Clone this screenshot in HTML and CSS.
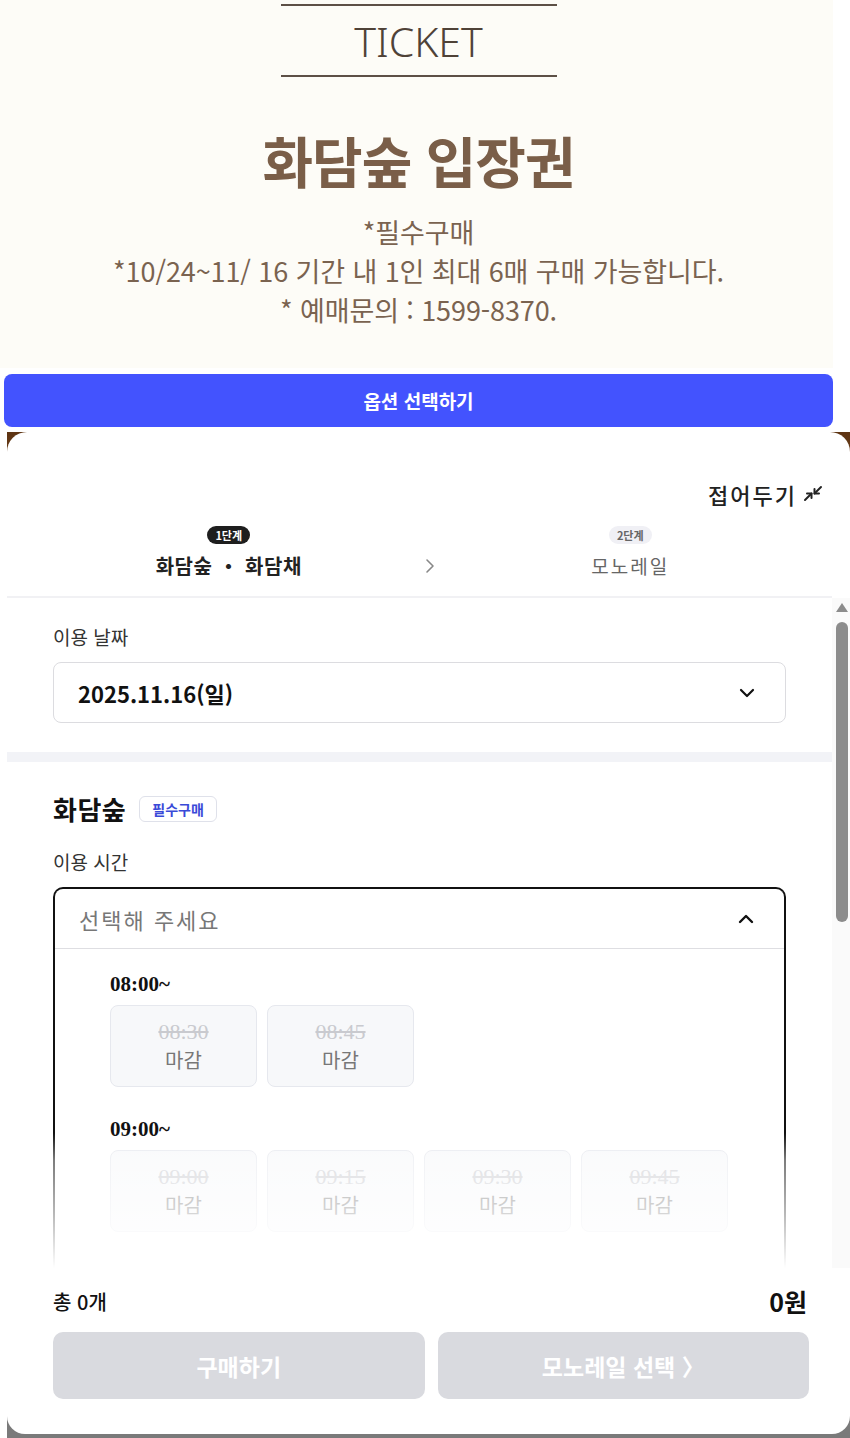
FILE: index.html
```html
<!DOCTYPE html>
<html lang="ko">
<head>
<meta charset="utf-8">
<title>화담숲 입장권</title>
<link rel="stylesheet" href="styles.css">
</head>
<body>
<section class="hero">
  <div class="ticket">TICKET</div>
  <h1 class="hero-title">화담숲 입장권</h1>
  <div class="hero-desc">
    <p class="desc-line">*필수구매</p>
    <p class="desc-line">*10/24~11/ 16 기간 내 1인 최대 6매 구매 가능합니다.</p>
    <p class="desc-line">* 예매문의 : 1599-8370.</p>
  </div>
</section>
<button class="cta">옵션 선택하기</button>

<div class="sheet-wrap">
  <div class="sheet">
    <div class="collapse">
      <span>접어두기</span>
      <svg class="collapse-icon" width="22" height="18" viewBox="0 0 22 18" fill="none" stroke="#222" stroke-width="2" stroke-linecap="round" stroke-linejoin="round">
        <path d="M3 16 L9.5 9.5"/><path d="M5 9.5 H9.5 V14"/>
        <path d="M19 3 L12.5 9.5"/><path d="M12.5 5 V9.5 H17"/>
      </svg>
    </div>

    <div class="steps">
      <div class="step">
        <span class="step-badge active">1단계</span>
        <span class="step-label active">화담숲 ・ 화담채</span>
      </div>
      <div class="step-arrow">
        <svg width="10" height="16" viewBox="0 0 10 16" fill="none" stroke="#888" stroke-width="1.6" stroke-linecap="round" stroke-linejoin="round"><path d="M2 2 L8 8 L2 14"/></svg>
      </div>
      <div class="step">
        <span class="step-badge">2단계</span>
        <span class="step-label">모노레일</span>
      </div>
    </div>

    <div class="scroll">
      <div class="scroll-content">
        <div class="section">
          <div class="field-label">이용 날짜</div>
          <div class="select">
            <span class="select-value">2025.11.16(일)</span>
            <svg width="16" height="10" viewBox="0 0 16 10" fill="none" stroke="#111" stroke-width="2.2" stroke-linecap="round" stroke-linejoin="round"><path d="M2 2 L8 8 L14 2"/></svg>
          </div>
        </div>
        <div class="band"></div>
        <div class="section section-2">
          <div class="title-row">
            <h2 class="prod-title">화담숲</h2>
            <span class="req-badge">필수구매</span>
          </div>
          <div class="field-label gap">이용 시간</div>
          <div class="time-select">
            <div class="time-head">
              <span class="placeholder">선택해 주세요</span>
              <svg width="16" height="10" viewBox="0 0 16 10" fill="none" stroke="#111" stroke-width="2.4" stroke-linecap="round" stroke-linejoin="round"><path d="M2 8 L8 2 L14 8"/></svg>
            </div>
            <div class="time-list">
              <div class="group-label">08:00~</div>
              <div class="slots">
                <div class="slot"><span class="slot-time">08:30</span><span class="slot-status">마감</span></div>
                <div class="slot"><span class="slot-time">08:45</span><span class="slot-status">마감</span></div>
              </div>
              <div class="group-label g2">09:00~</div>
              <div class="slots">
                <div class="slot"><span class="slot-time">09:00</span><span class="slot-status">마감</span></div>
                <div class="slot"><span class="slot-time">09:15</span><span class="slot-status">마감</span></div>
                <div class="slot"><span class="slot-time">09:30</span><span class="slot-status">마감</span></div>
                <div class="slot"><span class="slot-time">09:45</span><span class="slot-status">마감</span></div>
              </div>
            </div>
          </div>
        </div>
        <div class="fade"></div>
      </div>
      <div class="scrollbar">
        <div class="sb-arrow"></div>
        <div class="sb-thumb"></div>
      </div>
    </div>

    <div class="footer">
      <div class="total-row">
        <span class="total-count">총 0개</span>
        <span class="total-price">0원</span>
      </div>
      <div class="actions">
        <button class="btn">구매하기</button>
        <button class="btn">모노레일 선택 〉</button>
      </div>
    </div>
  </div>
</div>
</body>
</html>
```
FILE: styles.css
```css
* { box-sizing: border-box; margin: 0; padding: 0; }
body {
  margin: 0;
  width: 850px;
  height: 1438px;
  overflow: hidden;
  background: #fff;
  font-family: "Noto Sans CJK KR", "Noto Sans", sans-serif;
  color: #222;
}
button { font-family: inherit; border: none; cursor: pointer; }

.hero {
  width: 833px;
  height: 368px;
  background: #fdfcf7;
  padding: 4px 0 0 4px;
  text-align: center;
}
.ticket {
  width: 276px;
  height: 73px;
  margin: 0 auto;
  border-top: 2px solid #5d5046;
  border-bottom: 2px solid #5d5046;
  display: flex;
  align-items: center;
  justify-content: center;
  font-family: "Noto Sans", sans-serif;
  font-weight: 300;
  font-size: 41px;
  color: #4f4237;
}
.hero-title {
  margin-top: 51px;
  font-size: 55px;
  line-height: 62px;
  font-weight: 700;
  letter-spacing: -1px;
  color: #7a5e48;
}
.hero-desc {
  margin-top: 22px;
  color: #7a6350;
}
.desc-line {
  font-size: 27px;
  line-height: 39px;
  letter-spacing: -0.1px;
}
.cta {
  display: flex;
  align-items: center;
  justify-content: center;
  margin: 6px 0 0 4px;
  width: 829px;
  height: 53px;
  background: #4353fe;
  border-radius: 8px;
  color: #fff;
  font-size: 19px;
  font-weight: 700;
}

.sheet-wrap {
  margin: 5px 0 0 7px;
  width: 843px;
  padding-bottom: 4px;
  background: linear-gradient(to bottom, #5e3412 0, #6a3f1c 30px, transparent 30px, transparent calc(100% - 30px), #7a7a7a calc(100% - 30px));
}
.sheet {
  background: #fff;
  border-radius: 20px 20px 18px 18px;
  padding-bottom: 35px;
}

.collapse {
  padding: 48px 26px 0 0;
  display: flex;
  justify-content: flex-end;
  align-items: center;
  gap: 5px;
  font-size: 22px;
  line-height: 28px;
  font-weight: 500;
  letter-spacing: 2px;
  color: #222;
}
.collapse-icon { margin-top: -2px; }

.steps {
  margin: 18px 18px 0 0;
  padding: 0 11px 18px 31px;
  display: grid;
  grid-template-columns: 1fr 20px 1fr;
  border-bottom: 2px solid #f1f1f4;
}
.step { display: flex; flex-direction: column; align-items: center; }
.step-badge {
  height: 18px;
  line-height: 18px;
  padding: 0 8px;
  border-radius: 9px;
  font-size: 11px;
  font-weight: 700;
  background: #f0f0f5;
  color: #666;
}
.step-badge.active { background: #1e1e1e; color: #fff; }
.step-label {
  margin-top: 10px;
  font-size: 19px;
  line-height: 24px;
  color: #666;
  letter-spacing: 2px;
}
.step-label.active { color: #222; font-weight: 600; letter-spacing: 0.5px; font-size: 20px; }
.step-arrow {
  display: flex;
  align-items: flex-end;
  justify-content: center;
  padding-bottom: 4px;
}

.scroll { display: flex; height: 670px; }
.scroll-content {
  flex: 1;
  position: relative;
  overflow: hidden;
}
.scrollbar {
  width: 18px;
  background: #fafafa;
  padding: 5px 2px 0 4px;
}
.sb-arrow {
  width: 0;
  height: 0;
  margin: 0 auto;
  border-left: 6px solid transparent;
  border-right: 6px solid transparent;
  border-bottom: 9px solid #8c8c8c;
}
.sb-thumb {
  margin-top: 10px;
  height: 300px;
  background: #8c8c8c;
  border-radius: 6px;
}

.section { padding: 27px 46px 29px; }
.section-2 { padding: 32px 46px 0; }
.field-label { font-size: 19px; line-height: 24px; color: #333; }
.field-label.gap { margin-top: 26px; }
.select {
  margin-top: 13px;
  height: 61px;
  border: 1px solid #dcdce0;
  border-radius: 8px;
  padding: 0 30px 0 24px;
  display: flex;
  align-items: center;
  justify-content: space-between;
}
.select-value { font-size: 22px; font-weight: 600; color: #111; }
.band { height: 10px; background: #f2f3f7; }

.title-row { display: flex; align-items: center; gap: 13px; }
.prod-title { font-size: 26px; line-height: 30px; font-weight: 700; color: #111; letter-spacing: 0.5px; }
.req-badge {
  height: 26px;
  line-height: 24px;
  padding: 0 12px;
  border: 1px solid #dfe1ea;
  border-radius: 6px;
  color: #3a4ad8;
  font-size: 14px;
  font-weight: 600;
}

.time-select {
  margin-top: 13px;
  border: 2px solid #111;
  border-bottom: none;
  border-radius: 10px 10px 0 0;
  height: 420px;
}
.time-head {
  height: 60px;
  border-bottom: 1px solid #dedee2;
  padding: 0 30px 0 24px;
  display: flex;
  align-items: center;
  justify-content: space-between;
}
.placeholder { font-size: 22px; color: #777; letter-spacing: 2px; }
.time-list { padding: 22px 0 0 55px; }
.group-label {
  font-family: "Liberation Serif", serif;
  font-weight: 700;
  font-size: 21px;
  line-height: 26px;
  color: #111;
}
.group-label.g2 { margin-top: 29px; }
.slots { margin-top: 8px; display: flex; gap: 10px; }
.slot {
  width: 147px;
  height: 82px;
  background: #f7f8fa;
  border: 1px solid #e6e8ee;
  border-radius: 8px;
  display: flex;
  flex-direction: column;
  align-items: center;
  justify-content: center;
}
.slot-time {
  font-family: "Liberation Serif", serif;
  font-size: 22px;
  line-height: 28px;
  color: #c9cacf;
  text-decoration: line-through;
}
.slot-status { font-size: 20px; line-height: 28px; color: #777; }

.fade {
  position: absolute;
  left: 0;
  right: 0;
  bottom: 0;
  height: 135px;
  background: linear-gradient(to bottom, rgba(255,255,255,0) 0, rgba(255,255,255,0.45) 20%, rgba(255,255,255,0.7) 60%, #fff 100%);
}

.footer { padding: 21px 41px 0 46px; }
.total-row {
  display: flex;
  justify-content: space-between;
  align-items: center;
  height: 24px;
}
.total-count { font-size: 20px; font-weight: 500; color: #111; }
.total-price { font-size: 25px; font-weight: 700; color: #111; margin-right: 2px; }
.actions {
  margin-top: 19px;
  display: grid;
  grid-template-columns: 1fr 1fr;
  gap: 13px;
}
.btn {
  height: 67px;
  background: #d9dadf;
  border-radius: 10px;
  color: #fff;
  font-size: 23px;
  font-weight: 700;
}
```
